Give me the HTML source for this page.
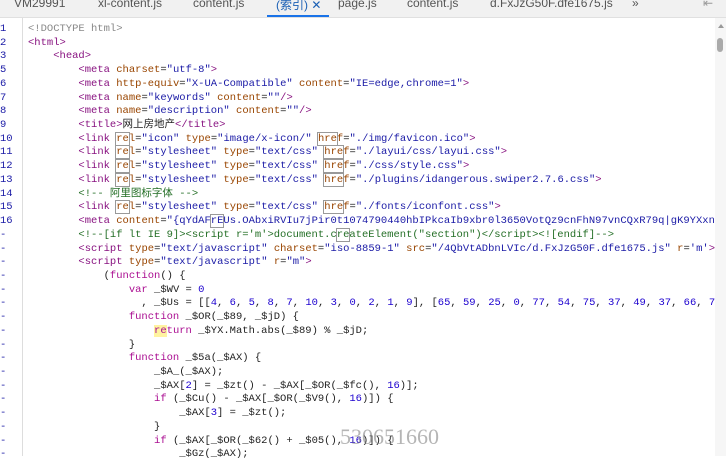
<!DOCTYPE html>
<html><head><meta charset="utf-8"><style>
body{margin:0;width:726px;height:456px;overflow:hidden;background:#fff;font-family:"Liberation Sans","Noto Sans CJK SC",sans-serif;position:relative}
.tabs{position:absolute;left:0;top:0;width:726px;height:17px;background:#f1f1f1;border-bottom:1px solid #e0e0e0;font-size:12px;color:#555}
.tabs span{position:absolute;top:-4px;white-space:nowrap}
.act{color:#1a5fb4}
.ul{position:absolute;left:267px;top:15px;width:62px;height:2px;background:#1a73e8}
.gut{position:absolute;left:0;top:18px;width:22px;height:438px;border-right:1px solid #ddd}
.ln{position:absolute;left:0;top:23px;font:10.5px/13.72px "Liberation Mono",monospace;color:#1a1aa6}
.code{position:absolute;left:28px;top:23px;width:687px;overflow:hidden;font:10.5px/13.72px "Liberation Mono","Noto Sans CJK SC",monospace;color:#222;white-space:pre}
.t{color:#881280}.a{color:#994500}.v{color:#1a1aa6}.c{color:#236e25}.k{color:#aa0d91}.n{color:#1c00cf}
.b{outline:1px solid #999}.y{background:#fff3a0}
.sb{position:absolute;left:715px;top:18px;width:11px;height:438px;background:#f6f6f6}
.wm{position:absolute;left:340px;top:424px;font:22px "Liberation Serif",serif;color:rgba(120,120,120,.55)}
</style></head><body>
<div class="tabs">
<span style="left:14px">VM29991</span><span style="left:98px">xl-content.js</span><span style="left:193px">content.js</span><span class="act" style="left:276px">(索引) ✕</span><span style="left:338px">page.js</span><span style="left:407px">content.js</span><span style="left:490px">d.FxJzG50F.dfe1675.js</span><span style="left:632px">»</span><span style="left:703px;color:#999">⇤</span>
<div class="ul"></div></div>
<div class="gut"></div>
<div class="ln">1<br>2<br>3<br>5<br>6<br>7<br>8<br>9<br>10<br>11<br>12<br>13<br>14<br>15<br>16<br>-<br>-<br>-<br>-<br>-<br>-<br>-<br>-<br>-<br>-<br>-<br>-<br>-<br>-<br>-<br>-<br>-</div>
<div class="code"><span style="color:#888">&lt;!DOCTYPE html&gt;</span>
<span class="t">&lt;html&gt;</span>
    <span class="t">&lt;head&gt;</span>
        <span class="t">&lt;meta</span> <span class="a">charset</span>=<span class="v">"utf-8"</span><span class="t">&gt;</span>
        <span class="t">&lt;meta</span> <span class="a">http-equiv</span>=<span class="v">"X-UA-Compatible"</span> <span class="a">content</span>=<span class="v">"IE=edge,chrome=1"</span><span class="t">&gt;</span>
        <span class="t">&lt;meta</span> <span class="a">name</span>=<span class="v">"keywords"</span> <span class="a">content</span>=<span class="v">""</span><span class="t">/&gt;</span>
        <span class="t">&lt;meta</span> <span class="a">name</span>=<span class="v">"description"</span> <span class="a">content</span>=<span class="v">""</span><span class="t">/&gt;</span>
        <span class="t">&lt;title&gt;</span>网上房地产<span class="t">&lt;/title&gt;</span>
        <span class="t">&lt;link</span> <span class="a"><span class="b">re</span>l</span>=<span class="v">"icon"</span> <span class="a">type</span>=<span class="v">"image/x-icon/"</span> <span class="a"><span class="b">hre</span>f</span>=<span class="v">"./img/favicon.ico"</span><span class="t">&gt;</span>
        <span class="t">&lt;link</span> <span class="a"><span class="b">re</span>l</span>=<span class="v">"stylesheet"</span> <span class="a">type</span>=<span class="v">"text/css"</span> <span class="a"><span class="b">hre</span>f</span>=<span class="v">"./layui/css/layui.css"</span><span class="t">&gt;</span>
        <span class="t">&lt;link</span> <span class="a"><span class="b">re</span>l</span>=<span class="v">"stylesheet"</span> <span class="a">type</span>=<span class="v">"text/css"</span> <span class="a"><span class="b">hre</span>f</span>=<span class="v">"./css/style.css"</span><span class="t">&gt;</span>
        <span class="t">&lt;link</span> <span class="a"><span class="b">re</span>l</span>=<span class="v">"stylesheet"</span> <span class="a">type</span>=<span class="v">"text/css"</span> <span class="a"><span class="b">hre</span>f</span>=<span class="v">"./plugins/idangerous.swiper2.7.6.css"</span><span class="t">&gt;</span>
        <span class="c">&lt;!-- 阿里图标字体 --&gt;</span>
        <span class="t">&lt;link</span> <span class="a"><span class="b">re</span>l</span>=<span class="v">"stylesheet"</span> <span class="a">type</span>=<span class="v">"text/css"</span> <span class="a"><span class="b">hre</span>f</span>=<span class="v">"./fonts/iconfont.css"</span><span class="t">&gt;</span>
        <span class="t">&lt;meta</span> <span class="a">content</span>=<span class="v">"{qYdAF<span class="b">rE</span>Us.OAbxiRVIu7jPir0t1074790440hbIPkcaIb9xbr0l3650VotQz9cnFhN97vnCQxR79q|gK9YXxn</span>
        <span class="c">&lt;!--[if lt IE 9]&gt;&lt;script r='m'&gt;document.c<span class="b">re</span>ateElement("section")&lt;/script&gt;&lt;![endif]--&gt;</span>
        <span class="t">&lt;script</span> <span class="a">type</span>=<span class="v">"text/javascript"</span> <span class="a">charset</span>=<span class="v">"iso-8859-1"</span> <span class="a">src</span>=<span class="v">"/4QbVtADbnLVIc/d.FxJzG50F.dfe1675.js"</span> <span class="a">r</span>=<span class="v">'m'</span><span class="t">&gt;</span>
        <span class="t">&lt;script</span> <span class="a">type</span>=<span class="v">"text/javascript"</span> <span class="a">r</span>=<span class="v">"m"</span><span class="t">&gt;</span>
            (<span class="k">function</span>() {
                <span class="k">var</span> _$WV = <span class="n">0</span>
                  , _$Us = [[<span class="n">4</span>, <span class="n">6</span>, <span class="n">5</span>, <span class="n">8</span>, <span class="n">7</span>, <span class="n">10</span>, <span class="n">3</span>, <span class="n">0</span>, <span class="n">2</span>, <span class="n">1</span>, <span class="n">9</span>], [<span class="n">65</span>, <span class="n">59</span>, <span class="n">25</span>, <span class="n">0</span>, <span class="n">77</span>, <span class="n">54</span>, <span class="n">75</span>, <span class="n">37</span>, <span class="n">49</span>, <span class="n">37</span>, <span class="n">66</span>, <span class="n">7</span>
                <span class="k">function</span> _$OR(_$89, _$jD) {
                    <span class="k"><span class="y">re</span>turn</span> _$YX.Math.abs(_$89) % _$jD;
                }
                <span class="k">function</span> _$5a(_$AX) {
                    _$A_(_$AX);
                    _$AX[<span class="n">2</span>] = _$zt() - _$AX[_$OR(_$fc(), <span class="n">16</span>)];
                    <span class="k">if</span> (_$Cu() - _$AX[_$OR(_$V9(), <span class="n">16</span>)]) {
                        _$AX[<span class="n">3</span>] = _$zt();
                    }
                    <span class="k">if</span> (_$AX[_$OR(_$62() + _$05(), <span class="n">16</span>)]) {
                        _$Gz(_$AX);
</div>
<div class="sb"><div style="position:absolute;left:3px;top:6px;width:0;height:0;border-left:3px solid transparent;border-right:3px solid transparent;border-bottom:4px solid #999"></div><div style="position:absolute;left:2px;top:20px;width:6px;height:14px;border-radius:3px;background:#aaa"></div></div>
<div class="wm">530651660</div>
</body></html>
